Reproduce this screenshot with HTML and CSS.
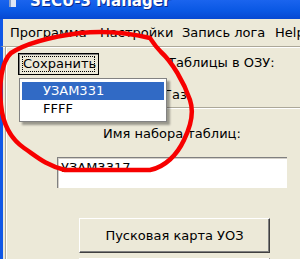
FILE: index.html
```html
<!DOCTYPE html>
<html lang="ru">
<head>
  <meta charset="UTF-8">
  <title>SECU-3 Manager</title>
  <link rel="stylesheet" href="styles.css">
</head>
<body>
  <div class="window">
    <div class="titlebar">
      <span class="app-icon"></span>
      <span class="title">SECU-3 Manager</span>
    </div>
    <div class="menubar">
      <span class="menu-item">Программа</span>
      <span class="menu-item">Настройки</span>
      <span class="menu-item">Запись лога</span>
      <span class="menu-item">Help</span>
    </div>
    <div class="panel">
      <div class="toprow">
        <button class="btn btn-pressed"><span class="focus">Сохранить</span></button>
        <div class="ram">
          <div class="ram-label">Таблицы в ОЗУ:</div>
          <div class="ram-value">Газ</div>
        </div>
      </div>
      <div class="sep"></div>
      <div class="set-label">Имя набора таблиц:</div>
      <div class="edit">УЗАМ3317</div>
      <button class="btn btn-wide">Пусковая карта УОЗ</button>
      <button class="btn btn-wide btn-next"></button>
    </div>

    <ul class="dropdown">
      <li class="selected">УЗАМ331</li>
      <li>FFFF</li>
    </ul>

    <!-- hand-drawn marker ring over the screenshot -->
    <svg class="marker" viewBox="0 0 300 259" width="300" height="259">
      <path d="M 150 38 C 125 32, 100 31, 80 33 C 50 37, 25 44, 11 53 C 1 62, -1 85, 1 105 C 3 125, 11 139, 24 148 C 36 156, 45 165, 65 170 L 150 170 C 165 167, 177 155, 184 140 C 191 126, 194 112, 190 100 C 184 82, 172 62, 161 52 C 155 46, 152 41, 150 38 Z"/>
    </svg>
  </div>
</body>
</html>
```

FILE: styles.css
```css
body {
  margin: 0;
  font-family: "DejaVu Sans", Tahoma, sans-serif;
  font-size: 12px;
  color: #000;
  background: #ece9d8;
}
.window {
  position: relative;
  width: 300px;
  height: 259px;
  overflow: hidden;
  display: flex;
  flex-direction: column;
  background: #ece9d8;
}
.titlebar {
  height: 19px;
  flex: none;
  background: linear-gradient(#1a64ee, #0a58e4 55%, #0648d2);
  display: flex;
  align-items: flex-start;
  color: #fff;
}
.app-icon {
  width: 5px;
  height: 7px;
  margin: 0 0 0 9px;
  background: #dfe6f5;
  border-left: 2px solid #8aa0c8;
}
.title {
  margin: -6px 0 0 14px;
  font-weight: bold;
  font-size: 15px;
  line-height: 15px;
  text-shadow: 1px 1px #0a2a8a;
}
.menubar {
  height: 27px;
  flex: none;
  display: flex;
  align-items: center;
  padding-left: 7px;
  border-left: 3px solid #1057e6;
  font-size: 13px;
  white-space: nowrap;
}
.menu-item {
  flex: none;
}
.menu-item:nth-child(1) { width: 90px; }
.menu-item:nth-child(2) { width: 82px; }
.menu-item:nth-child(3) { width: 93px; }
.panel {
  flex: 1;
  border-left: 3px solid #1057e6;
  border-top: 1px solid #aca899;
  box-shadow: inset 0 1px #fff;
  position: relative;
}
.panel::before {
  content: "";
  position: absolute;
  left: 2px;
  top: 0;
  bottom: 0;
  border-left: 1px solid #aca899;
  box-shadow: 1px 0 #fff;
}
.toprow {
  display: flex;
  align-items: flex-start;
}
.btn {
  font: inherit;
  color: #000;
  background: #ece9d8;
  border: 1px solid;
  border-color: #fff #404040 #404040 #fff;
  box-shadow: inset -1px -1px #808080;
  padding: 0;
}
.btn-pressed {
  width: 81px;
  height: 22px;
  margin: 6px 0 0 15px;
  border-color: #000;
  box-shadow: inset 1px 1px #808080;
  font-size: 13px;
}
.focus {
  display: block;
  margin: 2px 3px;
  border: 1px dotted #000;
  line-height: 14px;
}
.ram {
  margin: 8px 0 0 69px;
  font-size: 13px;
}
.ram-value {
  margin: 17px 0 0 -4px;
}
.sep {
  margin: 5px 0 0 157px;
  border-top: 1px solid #aca899;
  border-bottom: 1px solid #fff;
}
.set-label {
  margin: 17px 0 0 100px;
  font-size: 13px;
}
.edit {
  width: 226px;
  height: 28px;
  margin: 16px 0 0 54px;
  padding: 2px 0 0 3px;
  background: #fff;
  border-top: 1px solid #808080;
  border-left: 1px solid #808080;
  box-shadow: inset 1px 1px #d4d0c8;
  font-size: 13px;
  line-height: 15px;
}
.btn-wide {
  display: block;
  width: 191px;
  height: 35px;
  margin: 30px 0 0 76px;
  font-size: 13px;
}
.btn-next {
  margin-top: 5px;
}
.dropdown {
  position: absolute;
  left: 19px;
  top: 78px;
  width: 142px;
  margin: 0;
  padding: 3px 2px;
  list-style: none;
  background: #fff;
  border: 1px solid #828282;
  box-shadow: 3px 3px 2px rgba(0, 0, 0, 0.35);
  font-size: 13px;
}
.dropdown li {
  height: 18px;
  line-height: 18px;
  padding-left: 21px;
}
.dropdown .selected {
  background: #316ac5;
  color: #fff;
}
.marker {
  position: absolute;
  left: 0;
  top: 0;
  pointer-events: none;
}
.marker path {
  fill: none;
  stroke: #f70000;
  stroke-width: 4.5;
  stroke-linecap: round;
  stroke-linejoin: round;
}
```
